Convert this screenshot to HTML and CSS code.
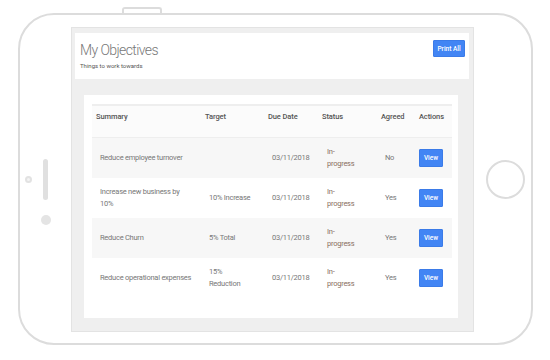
FILE: index.html
```html
<!DOCTYPE html>
<html lang="en">
<head>
    <meta charset="UTF-8">
    <meta name="viewport" content="width=device-width, initial-scale=1.0">
    <title>My Objectives</title>
    <link rel="stylesheet" href="styles.css">
</head>
<body>
    <!-- Tablet frame -->
    <div class="device">
        <span class="hw hw-top"></span>
        <span class="hw hw-bottom hw-bottom-1"></span>
        <span class="hw hw-bottom hw-bottom-2"></span>
        <span class="hw hw-camera"></span>
        <span class="hw hw-speaker"></span>
        <span class="hw hw-sensor"></span>
        <span class="hw hw-home"></span>

        <!-- Screen -->
        <div class="screen">
            <div class="page-header">
                <div>
                    <h1>My Objectives</h1>
                    <p class="subtitle">Things to work towards</p>
                </div>
                <button class="btn">Print All</button>
            </div>

            <div class="card">
                <table class="objectives-table">
                    <colgroup>
                        <col style="width: 109px">
                        <col style="width: 63px">
                        <col style="width: 54px">
                        <col style="width: 59px">
                        <col style="width: 38px">
                        <col style="width: 37px">
                    </colgroup>
                    <thead>
                        <tr>
                            <th>Summary</th>
                            <th>Target</th>
                            <th>Due Date</th>
                            <th>Status</th>
                            <th>Agreed</th>
                            <th>Actions</th>
                        </tr>
                    </thead>
                    <tbody>
                        <tr>
                            <td>Reduce employee turnover</td>
                            <td class="target"></td>
                            <td>03/11/2018</td>
                            <td class="status"><span>In-progress</span></td>
                            <td>No</td>
                            <td class="actions"><button class="btn btn-sm">View</button></td>
                        </tr>
                        <tr>
                            <td>Increase new business by 10%</td>
                            <td class="target">10% Increase</td>
                            <td>03/11/2018</td>
                            <td class="status"><span>In-progress</span></td>
                            <td>Yes</td>
                            <td class="actions"><button class="btn btn-sm">View</button></td>
                        </tr>
                        <tr>
                            <td>Reduce Churn</td>
                            <td class="target">5% Total</td>
                            <td>03/11/2018</td>
                            <td class="status"><span>In-progress</span></td>
                            <td>Yes</td>
                            <td class="actions"><button class="btn btn-sm">View</button></td>
                        </tr>
                        <tr>
                            <td>Reduce operational expenses</td>
                            <td class="target">15% Reduction</td>
                            <td>03/11/2018</td>
                            <td class="status"><span>In-progress</span></td>
                            <td>Yes</td>
                            <td class="actions"><button class="btn btn-sm">View</button></td>
                        </tr>
                    </tbody>
                </table>
            </div>
        </div>
    </div>
</body>
</html>
```

FILE: styles.css
```css
body {
    font-family: Roboto, "Liberation Sans", sans-serif;
    margin: 0;
    padding: 0;
    background-color: #fff;
    color: #777;
}

/* Tablet frame */
.device {
    position: relative;
    margin: 13px 0 0 18px;
    width: 515px;
    height: 332px;
    box-sizing: border-box;
    border: 2px solid #dcdcdc;
    border-radius: 36px;
    padding: 12px 0 0 51px;
}

.hw {
    position: absolute;
    display: block;
    box-sizing: border-box;
}

.hw-top,
.hw-bottom {
    width: 40px;
    height: 6px;
    border: 2px solid #dcdcdc;
    background-color: #fff;
}

.hw-top {
    left: 102px;
    top: -8px;
    border-bottom: none;
    border-radius: 3px 3px 0 0;
}

.hw-bottom {
    bottom: -8px;
    border-top: none;
    border-radius: 0 0 3px 3px;
}

.hw-bottom-1 {
    left: 102px;
}

.hw-bottom-2 {
    left: 150px;
}

.hw-camera {
    left: 5px;
    top: 161px;
    width: 7px;
    height: 7px;
    border-radius: 50%;
    border: 2px solid #e2e2e2;
    background-color: #f4f4f4;
}

.hw-speaker {
    left: 23px;
    top: 144px;
    width: 5px;
    height: 41px;
    border-radius: 3px;
    background-color: #e0e0e0;
}

.hw-sensor {
    left: 21px;
    top: 200px;
    width: 10px;
    height: 10px;
    border-radius: 50%;
    background-color: #e4e4e4;
}

.hw-home {
    left: 466px;
    top: 145px;
    width: 39px;
    height: 39px;
    border-radius: 50%;
    border: 2px solid #dcdcdc;
}

/* Screen */
.screen {
    width: 403px;
    height: 305px;
    box-sizing: border-box;
    background-color: #efefef;
    border: 1px solid #e3e3e3;
    padding: 5px 4px 0 3px;
}

.page-header {
    background-color: #fff;
    height: 46px;
    box-sizing: border-box;
    padding: 7px 4px 0 5px;
    display: flex;
    justify-content: space-between;
    align-items: flex-start;
}

h1 {
    margin: 0;
    font-size: 14px;
    font-weight: 300;
    letter-spacing: -0.6px;
    color: #777;
    line-height: 20px;
}

.subtitle {
    margin: 2px 0 0;
    font-size: 6px;
    color: #555;
}

.btn {
    font-family: Roboto, "Liberation Sans", sans-serif;
    background-color: #4285f4;
    color: #fff;
    border: 1px solid #3b7be8;
    border-radius: 1px;
    font-size: 6.5px;
    font-weight: 500;
    width: 32px;
    height: 17px;
    padding: 0;
    cursor: pointer;
}

.btn-sm {
    width: 24px;
    height: 18px;
}

/* Table card */
.card {
    background-color: #fff;
    margin: 16px 11px 0 9px;
    height: 223px;
    box-sizing: border-box;
    padding: 9px 7px 0 8px;
}

.objectives-table {
    width: 360px;
    table-layout: fixed;
    border-collapse: collapse;
    font-size: 7.5px;
    letter-spacing: -0.25px;
}

.objectives-table th {
    text-align: left;
    font-weight: 500;
    letter-spacing: -0.1px;
    color: #555;
    background-color: #fbfbfb;
    border-top: 2px solid #eee;
    border-bottom: 1px solid #eee;
    height: 32px;
    box-sizing: border-box;
    padding: 6px 4px 0;
    vertical-align: top;
}

.objectives-table td {
    padding: 0 8px;
    height: 40px;
    line-height: 12px;
    vertical-align: middle;
}

.objectives-table tbody tr:nth-child(odd) {
    background-color: #f7f7f7;
}

.objectives-table td.target {
    padding-right: 12px;
}

.objectives-table td.status {
    color: #8a6f63;
    padding-left: 9px;
}

.objectives-table td.status span {
    display: block;
    width: 30px;
}

.objectives-table td.actions {
    padding: 0 4px;
}
```
